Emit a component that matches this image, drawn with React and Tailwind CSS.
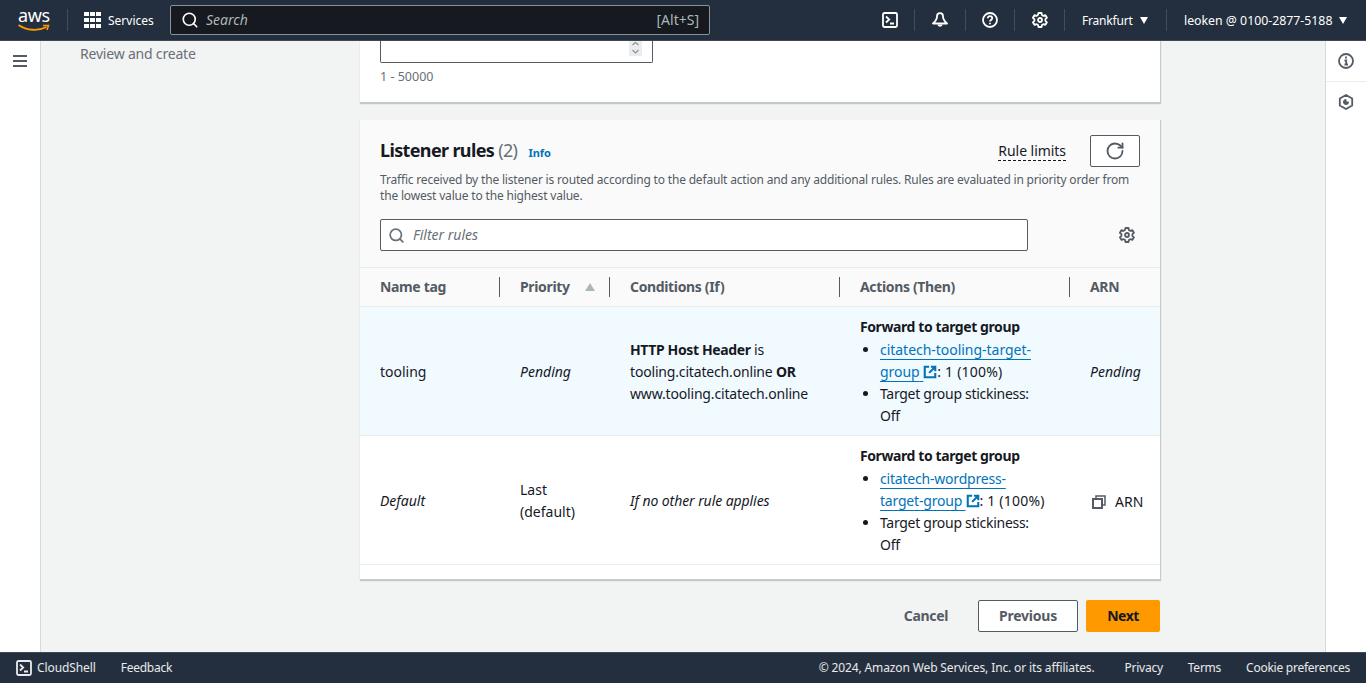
import { Search, RotateCw } from "lucide-react";

function ShellIcon({ size = 16 }) {
    return (
        <svg width={size} height={size} viewBox="0 0 16 16" fill="none" stroke="currentColor" strokeWidth="1.8">
            <rect x="1" y="1" width="14" height="14" rx="1.5" />
            <path d="M4 4.5 7.2 7.5 4 10.5M8 11.5h4" />
        </svg>
    )
}

function BellIcon() {
    return (
        <svg width="16" height="16" viewBox="0 0 16 16" fill="none" stroke="currentColor" strokeWidth="1.8" strokeLinejoin="round">
            <path d="M8 1.2c-1.800 0-3 1.400-3 3.300 0 2.800-1.200 4.500-4 7h14c-2.800-2.500-4-4.200-4-7 0-1.900-1.200-3.300-3-3.300Z" />
            <path d="M6.300 12.500a1.800 1.800 0 0 0 3.400 0" strokeWidth="2" />
        </svg>
    )
}

function HelpIcon() {
    return (
        <svg width="16" height="16" viewBox="0 0 16 16" fill="none" stroke="currentColor" strokeWidth="1.800">
            <circle cx="8" cy="8" r="7" />
            <path d="M5.800 6.200C5.800 5 6.800 4.200 8 4.200s2.200.8 2.200 2c0 1.700-2.200 1.800-2.200 3.300" />
            <path d="M8 10.700v1.600" />
        </svg>
    )
}

function GearIcon({ size = 16, className = "" }) {
    return (
        <svg width={size} height={size} viewBox="0 0 16 16" fill="none" stroke="currentColor" strokeWidth="1.800" strokeLinejoin="round" className={className}>
            <path d="M6.500 1h3l.4 2 1.500.9 2-.7 1.500 2.600-1.500 1.400v1.700l1.500 1.400-1.500 2.600-2-.7-1.500.9-.4 1.900h-3l-.4-1.900-1.500-.9-2 .7L.9 10.300l1.500-1.400V7.200L.9 5.800l1.500-2.600 2 .7 1.500-.9Z" />
            <circle cx="8" cy="8" r="2" />
        </svg>
    )
}

function ExternalIcon() {
    return (
        <svg width="14" height="14" viewBox="0 0 16 16" fill="none" stroke="#0073bb" strokeWidth="2.4" className="inline-block align-[-2px]">
            <path d="M7 2H2v12h12V9" />
            <path d="M9 2h5v5M14 2 7 9" />
        </svg>
    )
}

function CopyIcon() {
    return (
        <svg width="14" height="14" viewBox="0 0 14 14" fill="none" stroke="#545b64" strokeWidth="2">
            <rect x="1" y="4" width="9" height="9" />
            <path d="M4 3V1h9v9h-2" strokeWidth="1.500" />
        </svg>
    )
}

function Divider() {
    return <span className="block w-px h-[22px] bg-[#414d5c]" />
}

function Caret({ className = "" }) {
    return <span className={`block w-0 h-0 border-x-[4px] border-x-transparent border-t-[7px] border-t-white ${className}`} />
}

function Header() {
    return (
        <header className="h-[41px] shrink-0 bg-[#232f3e] border-b border-[#414750] text-white flex items-center text-xs">
            <div className="w-[67px] pl-[18px] relative h-full">
                <span className="block text-[18px] leading-[18px] pt-[6px] h-[26px] tracking-[-0.4px]">aws</span>
                <svg width="32" height="8" viewBox="0 0 32 8" fill="none" className="absolute left-[18px] top-[24px]">
                    <path d="M0.500 1C9 7 21 7 28.500 3" stroke="#ff9900" strokeWidth="1.800" />
                    <path d="M25 1.500 30.500 1.500 29 6" stroke="#ff9900" strokeWidth="1.500" />
                </svg>
            </div>
            <Divider />
            <div className="grid grid-cols-3 gap-[1.500px] w-[17px] ml-4">
                {Array.from({ length: 9 }).map((_, i) => <span key={i} className="w-[4.500px] h-[4.500px] bg-white" />)}
            </div>
            <span className="ml-[7px] w-[62px] mt-[2px]">Services</span>
            <div className="w-[540px] h-[30px] bg-[#16191f] border border-[#879596] rounded-[2px] flex items-center px-[10px]">
                <Search size={18} strokeWidth={2.2} />
                <span className="ml-[7px] italic text-sm text-[#aab7b8] grow">Search</span>
                <span className="text-sm text-[#aab7b8]">[Alt+S]</span>
            </div>
            <div className="ml-[172px] w-4"><ShellIcon /></div>
            <span className="ml-4"><Divider /></span>
            <div className="ml-[17px] w-4"><BellIcon /></div>
            <span className="ml-[17px]"><Divider /></span>
            <div className="ml-4 w-4"><HelpIcon /></div>
            <span className="ml-4"><Divider /></span>
            <div className="ml-[17px] w-4"><GearIcon /></div>
            <span className="ml-4"><Divider /></span>
            <span className="ml-[17px] w-[51px] mt-[2px] tracking-[-0.2px]">Frankfurt</span>
            <Caret className="ml-[7px]" />
            <span className="ml-[18px]"><Divider /></span>
            <span className="ml-[17px] w-[149px] mt-[2px] whitespace-nowrap text-[12.300px]">leoken @ 0100-2877-5188</span>
            <Caret className="ml-[6px]" />
        </header>
    )
}

function TargetGroup({ name1, name2, nameTracking }) {
    return (
        <div>
            <b className="font-bold tracking-[-0.41px]">Forward to target group</b>
            <ul className="pl-5 list-disc mt-[1px]">
                <li>
                    <a className={`text-[#0073bb] underline underline-offset-[4px] ${nameTracking}`}>{name1}<br />{name2}&nbsp;</a>
                    <ExternalIcon /><span className="tracking-[0.2px]">: 1 (100%)</span>
                </li>
                <li className="tracking-[-0.29px]">Target group stickiness:<br />Off</li>
            </ul>
        </div>
    )
}

const headCols = [
    { label: "Name tag", sep: true },
    { label: "Priority", sep: true, sort: true },
    { label: "Conditions (If)", sep: true },
    { label: "Actions (Then)", sep: true },
    { label: "ARN" },
]

function RulesTable() {
    const cols = "grid grid-cols-[140px_110px_230px_230px_90px] items-center"
    return (
        <div>
            <div className={`${cols} h-[40px] bg-[#fafafa] border-y border-[#eaeded] text-[#545b64] font-bold tracking-[-0.35px]`}>
                {headCols.map(col => (
                    <div key={col.label} className={`h-5 flex items-center justify-between pl-5 pr-[14px] leading-5 ${col.sep ? "border-r border-[#545b64]" : ""}`}>
                        <span>{col.label}</span>
                        {col.sort && <span className="w-0 h-0 border-x-[5px] border-x-transparent border-b-[8px] border-b-[#aab7b8]" />}
                    </div>
                ))}
            </div>
            <div className={`${cols} h-[129px] bg-[#f1faff] border-b border-[#eaeded]`}>
                <div className="pl-5 pt-[1px]">tooling</div>
                <div className="pl-5 pt-[1px] italic">Pending</div>
                <div className="pl-5 pt-[1px] tracking-[-0.17px]"><b className="tracking-[-0.38px]">HTTP Host Header</b> is<br />tooling.citatech.online <b className="tracking-[-0.38px]">OR</b><br />www.tooling.citatech.online</div>
                <div className="pl-5"><TargetGroup name1="citatech-tooling-target-" name2="group" nameTracking="tracking-[-0.03px]" /></div>
                <div className="pl-5 pt-[1px] italic">Pending</div>
            </div>
            <div className={`${cols} h-[129px] border-b border-[#eaeded]`}>
                <div className="pl-5 pt-[1px] italic">Default</div>
                <div className="pl-5 pt-[1px]">Last<br />(default)</div>
                <div className="pl-5 pt-[1px] italic tracking-[-0.08px]">If no other rule applies</div>
                <div className="pl-5"><TargetGroup name1="citatech-wordpress-" name2="target-group" nameTracking="tracking-[-0.2px]" /></div>
                <div className="pl-[22px] pt-[3px] flex items-center gap-[9px]"><CopyIcon /> ARN</div>
            </div>
        </div>
    )
}

export default function App() {
    return (
        <div className="h-[683px] flex flex-col overflow-hidden bg-[#f2f3f3] text-[#16191f] text-sm leading-[22px] font-['Noto_Sans',sans-serif]">
            <Header />
            <div className="flex grow min-h-0">
                <aside className="w-[41px] shrink-0 bg-white border-r border-[#d5dbdb] pt-[14px] pl-[13px]">
                    <div className="w-[14px] flex flex-col gap-[3px]">
                        <span className="h-[2px] bg-[#545b64]" />
                        <span className="h-[2px] bg-[#545b64]" />
                        <span className="h-[2px] bg-[#545b64]" />
                    </div>
                </aside>
                <nav className="w-[319px] shrink-0 pl-[39px] pt-[2px] tracking-[-0.2px] text-[#687078]">Review and create</nav>
                <main className="w-[801px] shrink-0 flex flex-col">
                    <section className="w-[801px] h-[62px] bg-white border-r border-b border-[#c6cccc] shadow-[0_1px_1px_rgba(0,28,36,0.2)] pl-5">
                        <div className="w-[273px] h-[22px] bg-white border border-t-0 border-[#545b64] rounded-b-[2px] relative">
                            <div className="absolute right-[10px] top-0 w-[13px] h-[15px] bg-[#eaeded] flex flex-col items-center text-[#879596]">
                                <svg width="9" height="14" viewBox="0 0 9 14" fill="none" stroke="currentColor" strokeWidth="1.200">
                                    <path d="M1.500 4 4.500 1.500 7.500 4M1.500 9 4.500 12 7.500 9" />
                                </svg>
                            </div>
                        </div>
                        <p className="text-[12.500px] leading-4 text-[#687078] mt-[6px]">1 - 50000</p>
                    </section>
                    <section className="w-[801px] h-[460px] mt-[17px] bg-white border-r border-b border-[#c6cccc] shadow-[0_1px_1px_rgba(0,28,36,0.2)]">
                        <div className="h-[147px] bg-[#fafafa] px-5 pt-[15px]">
                            <div className="flex items-center h-[32px]">
                                <h2 className="text-lg leading-[30px] h-[32px] font-bold tracking-[-0.64px]">Listener rules <span className="font-normal text-[#687078]">(2)</span></h2>
                                <a className="ml-[11px] mt-[3px] text-[11px] font-bold text-[#0073bb]">Info</a>
                                <span className="ml-auto text-sm leading-[18px] tracking-[-0.05px] border-b border-dashed border-[#16191f]">Rule limits</span>
                                <button className="ml-6 w-[50px] h-[32px] bg-white border border-[#545b64] rounded-[2px] flex items-center justify-center text-[#545b64]">
                                    <RotateCw size={20} strokeWidth={2.2} />
                                </button>
                            </div>
                            <p className="text-xs leading-4 tracking-[-0.18px] text-[#545b64] mt-[5px]">Traffic received by the listener is routed according to the default action and any additional rules. Rules are evaluated in priority order from the lowest value to the highest value.</p>
                            <div className="flex items-center mt-[15px]">
                                <div className="w-[648px] h-[32px] bg-white border border-[#545b64] rounded-[2px] flex items-center pl-[7px] text-[#687078]">
                                    <Search size={17} strokeWidth={2.4} />
                                    <span className="ml-[8px] text-sm italic">Filter rules</span>
                                </div>
                                <GearIcon className="ml-[91px] text-[#545b64]" />
                            </div>
                        </div>
                        <RulesTable />
                    </section>
                    <div className="flex items-center justify-end w-[800px] mt-[20px] text-sm font-bold">
                        <span className="text-[#545b64] tracking-[-0.35px] mr-[30px]">Cancel</span>
                        <button className="w-[100px] h-[32px] bg-white border border-[#545b64] rounded-[2px] tracking-[-0.2px] text-[#545b64]">Previous</button>
                        <button className="ml-2 w-[74px] h-[32px] bg-[#ff9900] rounded-[2px] tracking-[-0.5px]">Next</button>
                    </div>
                </main>
                <div className="grow" />
                <aside className="w-[41px] shrink-0 bg-white border-l border-[#d5dbdb]">
                    <div className="h-[41px] flex items-center justify-center border-b border-[#eaeded] text-[#545b64]">
                        <svg width="16" height="16" viewBox="0 0 16 16" fill="none" stroke="currentColor" strokeWidth="1.800">
                            <circle cx="8" cy="8" r="7" />
                            <path d="M8 3.500v2M6.500 7.500H8.200V11.500M6.500 11.500H10" />
                        </svg>
                    </div>
                    <div className="h-[40px] flex items-center justify-center text-[#545b64]">
                        <svg width="16" height="16" viewBox="0 0 16 16" fill="none" stroke="currentColor" strokeWidth="1.800" strokeLinejoin="round">
                            <path d="M8 1 14.200 4.500V11.500L8 15 1.800 11.500V4.500Z" />
                            <path d="M8 5.500A2.500 2.500 0 1 0 10.500 8H8Z" fill="currentColor" strokeWidth="1" />
                        </svg>
                    </div>
                </aside>
            </div>
            <footer className="h-[31px] shrink-0 bg-[#232f3e] border-t border-[#414750] text-white/90 text-xs flex items-center pl-4 pr-4">
                <ShellIcon />
                <span className="ml-[5px] tracking-[-0.1px]">CloudShell</span>
                <span className="ml-[25px] tracking-[-0.25px]">Feedback</span>
                <span className="ml-auto tracking-[-0.13px]">© 2024, Amazon Web Services, Inc. or its affiliates.</span>
                <span className="ml-[30px] tracking-[-0.25px]">Privacy</span>
                <span className="ml-[25px] tracking-[-0.25px]">Terms</span>
                <span className="ml-[25px] tracking-[-0.25px]">Cookie preferences</span>
            </footer>
        </div>
    )
}
